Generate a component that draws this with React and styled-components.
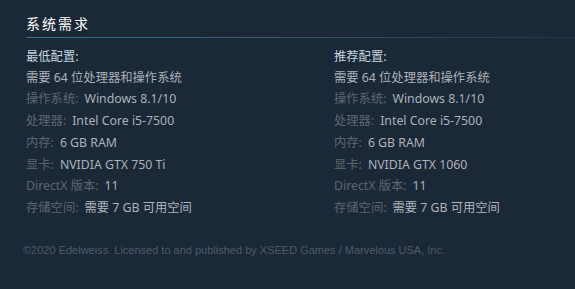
import React from 'react';
import styled, { createGlobalStyle } from 'styled-components';

const GlobalStyle = createGlobalStyle`
	html, body {
		margin: 0;
		padding: 0;
		background: #1b2838;
	}
`;

const Page = styled.div`
	width: 575px;
	height: 289px;
	background: #1b2838;
	padding: 14px 0 0 26px;
	box-sizing: border-box;
	font-family: "Noto Sans", "Noto Sans CJK SC", sans-serif;
`;

const Heading = styled.h2`
	margin: 0;
	padding-bottom: 4px;
	font-size: 14px;
	font-weight: normal;
	letter-spacing: 2px;
	line-height: 20px;
	color: #ffffff;
	position: relative;
	&::after {
		content: '';
		position: absolute;
		left: 0;
		right: 0;
		bottom: 0;
		height: 1px;
		background: linear-gradient(to right, #3b7193 0%, #2e5470 55%, #223548 100%);
	}
`;

const Columns = styled.div`
	display: grid;
	grid-template-columns: 308px 1fr;
	margin-top: 8px;
`;

const Col = styled.div`
	font-size: 12.3px;
	line-height: 21.7px;
	color: #acb2b8;
`;

const Title = styled.div`
	color: #c6d4df;
	margin-bottom: -1px;
`;

const List = styled.ul`
	list-style: none;
	margin: 0;
	padding: 0;
`;

const Row = styled.li``;

const Label = styled.span`
	color: #5d6670;
	margin-right: 6px;
`;

const Footer = styled.div`
	margin-top: 25px;
	margin-left: -3px;
	font-family: "Liberation Sans", Arial, sans-serif;
	font-size: 11px;
	color: #4e5a68;
`;

const columns = [
	{
		title: '最低配置:',
		rows: [
			['操作系统:', 'Windows 8.1/10'],
			['处理器:', 'Intel Core i5-7500'],
			['内存:', '6 GB RAM'],
			['显卡:', 'NVIDIA GTX 750 Ti'],
			['DirectX 版本:', '11'],
			['存储空间:', '需要 7 GB 可用空间'],
		],
	},
	{
		title: '推荐配置:',
		rows: [
			['操作系统:', 'Windows 8.1/10'],
			['处理器:', 'Intel Core i5-7500'],
			['内存:', '6 GB RAM'],
			['显卡:', 'NVIDIA GTX 1060'],
			['DirectX 版本:', '11'],
			['存储空间:', '需要 7 GB 可用空间'],
		],
	},
];

const App = () => (
	<Page>
		<GlobalStyle />
		<Heading>系统需求</Heading>
		<Columns>
			{columns.map(col => (
				<Col key={col.title}>
					<Title>{col.title}</Title>
					<List>
						<Row>需要 64 位处理器和操作系统</Row>
						{col.rows.map(([label, value]) => (
							<Row key={label}>
								<Label>{label}</Label>
								{value}
							</Row>
						))}
					</List>
				</Col>
			))}
		</Columns>
		<Footer>©2020 Edelweiss. Licensed to and published by XSEED Games / Marvelous USA, Inc.</Footer>
	</Page>
);

export default App;
